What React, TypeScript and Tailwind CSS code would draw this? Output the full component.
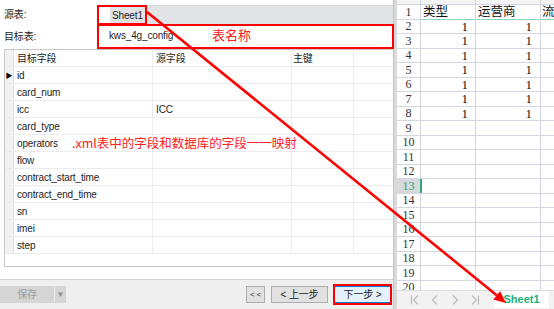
import React from "react";

const fields = [
  "id",
  "card_num",
  "icc",
  "card_type",
  "operators",
  "flow",
  "contract_start_time",
  "contract_end_time",
  "sn",
  "imei",
  "step",
];
const sources: Record<string, string> = { icc: "ICC" };

function NavIcon({ kind }: { kind: "first" | "prev" | "next" | "last" }) {
  return (
    <svg width="12" height="12" viewBox="0 0 12 12" fill="none" stroke="#b8b8b8" strokeWidth="1.1">
      {kind === "first" && (
        <>
          <line x1="2.5" y1="1.5" x2="2.5" y2="10.5" />
          <polyline points="9,1.5 4.5,6 9,10.5" />
        </>
      )}
      {kind === "prev" && <polyline points="8,1.5 3.5,6 8,10.5" />}
      {kind === "next" && <polyline points="4,1.5 8.5,6 4,10.5" />}
      {kind === "last" && (
        <>
          <line x1="9.5" y1="1.5" x2="9.5" y2="10.5" />
          <polyline points="3,1.5 7.5,6 3,10.5" />
        </>
      )}
    </svg>
  );
}

export default function App() {
  const sheetRows = Array.from({ length: 20 }, (_, i) => i + 1);
  return (
    <div className="relative w-[554px] h-[309px] overflow-hidden flex bg-white font-['Liberation_Sans','Noto_Sans_CJK_SC',sans-serif]">
      {/* Left dialog */}
      <div className="w-[393px] shrink-0 h-full flex flex-col bg-white text-[10px] text-[#1e1e1e] tracking-[-0.15px]">
        <div className="flex h-[19px] mt-[5px]">
          <div className="w-[98px] pl-[4px] flex items-center">源表:</div>
          <div className="flex-1 flex">
            <div className="w-[12px] bg-white" />
            <div className="flex-1 bg-[#e2e3e5] border-t border-[#d2d5da] flex items-center pl-[2px]">Sheet1</div>
          </div>
        </div>
        <div className="flex h-[24px]">
          <div className="w-[98px] pl-[4px] flex items-center">目标表:</div>
          <div className="flex-1 flex items-center pl-[11px] pb-[2px]">kws_4g_config</div>
        </div>
        <div className="ml-[4px] mt-[1px] h-[218px] border border-r-0 border-[#c8c8c8] flex flex-col">
          <div className="flex h-[17px] border-b border-[#ececec] shrink-0">
            <div className="w-[9px] bg-[#f2f2f2] border-r border-[#dedede]" />
            <div className="w-[139px] pl-[3px] flex items-center border-r border-[#ececec]">目标字段</div>
            <div className="w-[139px] pl-[3px] flex items-center border-r border-[#ececec]">源字段</div>
            <div className="w-[62px] pl-[1px] flex items-center border-r border-[#ececec]">主键</div>
            <div className="flex-1" />
          </div>
          {fields.map((f, i) => (
            <div key={f} className="flex h-[17px] border-b border-[#ececec] shrink-0">
              <div className="w-[9px] bg-[#f2f2f2] border-r border-[#dedede] flex items-center justify-center">
                {i === 0 && <span className="text-[7px] leading-none text-black">▶</span>}
              </div>
              <div className="w-[139px] pl-[3px] flex items-center border-r border-[#ececec]">{f}</div>
              <div className="w-[139px] pl-[3px] flex items-center border-r border-[#ececec]">{sources[f] ?? ""}</div>
              <div className="w-[62px] border-r border-[#ececec]" />
              <div className="flex-1 bg-white" />
            </div>
          ))}
          <div className="flex-1" />
        </div>
        <div className="flex-1" />
        <div className="h-[30px] border-t border-[#d4d4d4] bg-[#efefef] flex items-center pr-[2px]">
          <div className="h-[17px] w-[66px] bg-[#d5d5d5] flex">
            <div className="w-[54px] flex items-center justify-center text-[#9c9c9c]">保存</div>
            <div className="w-px bg-[#ececec] my-[1px]" />
            <div className="flex-1 flex items-center justify-center text-[#8c8c8c] text-[8px]">▼</div>
          </div>
          <div className="flex-1" />
          <div className="h-[17px] w-[19px] bg-[#e1e1e1] border border-[#adadad] flex items-center justify-center text-[8px] text-[#333] whitespace-pre">{"< <"}</div>
          <div className="h-[17px] w-[57px] ml-[6px] bg-[#e1e1e1] border border-[#adadad] flex items-center justify-center text-[#222]">&lt; 上一步</div>
          <div className="h-[17px] w-[57px] ml-[6px] bg-[#e5f1fb] border border-[#0078d7] flex items-center justify-center text-[#222]">下一步 &gt;</div>
        </div>
      </div>

      {/* Divider */}
      <div className="w-[4px] shrink-0 h-full bg-[#d9d9d9] border-l border-[#c4c4c4]" />

      {/* Spreadsheet */}
      <div className="flex-1 min-w-0 h-full flex flex-col bg-white">
        <div className="h-[290px] overflow-hidden flex flex-col">
          <div className="flex h-[5px] shrink-0 bg-[#f4f4f4] border-b border-[#d4d7e2]">
            <div className="w-[24px] shrink-0 border-r border-[#d4d7e2]" />
            <div className="w-[55px] shrink-0 border-r border-[#d4d7e2]" />
            <div className="w-[65px] shrink-0 border-r border-[#d4d7e2]" />
          </div>
          {sheetRows.map((r) => (
            <div key={r} className="flex h-[14.5px] shrink-0">
              <div
                className={
                  r === 13
                    ? "w-[24px] shrink-0 border-r border-b border-[#d4d7e2] bg-[#d7d9dc] text-[#2aa878] flex items-center justify-center font-['Liberation_Serif',serif] text-[12px]"
                    : "w-[24px] shrink-0 border-r border-b border-[#d4d7e2] text-[#333] flex items-center justify-center font-['Liberation_Serif',serif] text-[12px]"
                }
              >
                {r}
              </div>
              <div
                className={
                  r === 1
                    ? "w-[55px] shrink-0 border-r border-b border-r-[#d4d7e2] border-b-[#8fd6b5] flex items-center pl-[2px] text-[12.5px] text-[#111] font-['Noto_Sans_CJK_SC',sans-serif]"
                    : "w-[55px] shrink-0 border-r border-b border-[#d4d7e2] flex items-center justify-end pr-[7px] text-[13px] text-[#111] font-['Liberation_Serif',serif]"
                }
              >
                {r === 1 ? "类型" : r <= 8 ? "1" : ""}
                {r === 13 && <div className="self-stretch w-[2px] bg-[#2aa878] mr-auto -ml-[1px]" />}
              </div>
              <div
                className={
                  r === 1
                    ? "w-[65px] shrink-0 border-r border-b border-r-[#d4d7e2] border-b-[#8fd6b5] flex items-center pl-[2px] text-[12.5px] text-[#111] font-['Noto_Sans_CJK_SC',sans-serif]"
                    : "w-[65px] shrink-0 border-r border-b border-[#d4d7e2] flex items-center justify-end pr-[8px] text-[13px] text-[#111] font-['Liberation_Serif',serif]"
                }
              >
                {r === 1 ? "运营商" : r <= 8 ? "1" : ""}
              </div>
              <div
                className={
                  r === 1
                    ? "flex-1 min-w-0 border-b border-[#8fd6b5] flex items-center pl-[1px] text-[12.5px] text-[#111] font-['Noto_Sans_CJK_SC',sans-serif] overflow-hidden whitespace-nowrap"
                    : "flex-1 min-w-0 border-b border-[#d4d7e2]"
                }
              >
                {r === 1 ? "流" : ""}
              </div>
            </div>
          ))}
        </div>
        <div className="h-[19px] bg-[#f2f2f2] border-t border-[#dcdcdc] flex items-start">
          <div className="flex items-center h-[17px] pl-[12px] gap-[8px]">
            <NavIcon kind="first" />
            <NavIcon kind="prev" />
            <NavIcon kind="next" />
            <NavIcon kind="last" />
          </div>
          <div className="ml-[13px] w-[55px] h-[17px] bg-white flex items-center justify-center text-[11px] font-bold text-[#22b07a]">
            Sheet1
          </div>
        </div>
      </div>

      {/* Red annotations overlay */}
      <div className="absolute left-[97px] top-[5px] w-[50px] h-[20px] border-2 border-[#ff0000] pointer-events-none" />
      <div className="absolute left-[97px] top-[24px] w-[297px] h-[25px] border-2 border-[#ff0000] pointer-events-none" />
      <div className="absolute left-[333px] top-[284px] w-[59px] h-[21px] border-2 border-[#ff0000] pointer-events-none" />
      <div className="absolute left-[212px] top-[26px] text-[13px] leading-[18px] text-[#ff2020] font-['Noto_Sans_CJK_SC',sans-serif]">
        表名称
      </div>
      <div className="absolute left-[72px] top-[134px] text-[12.5px] leading-[18px] text-[#ff2020] font-['Noto_Sans_CJK_SC',sans-serif] whitespace-nowrap">
        .xml表中的字段和数据库的字段一一映射
      </div>
      <svg className="absolute left-0 top-0 pointer-events-none" width="554" height="309" viewBox="0 0 554 309">
        <line x1="147" y1="12" x2="497" y2="295.4" stroke="#ff0000" strokeWidth="2.6" />
        <polygon points="506,303 493.3,299.5 500.1,291.2" fill="#ff0000" />
      </svg>
    </div>
  );
}
